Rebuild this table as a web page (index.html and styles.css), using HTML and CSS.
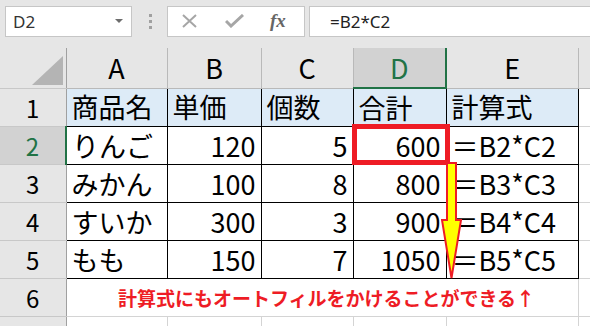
FILE: index.html
```html
<!DOCTYPE html>
<html lang="ja">
<head>
    <meta charset="UTF-8">
    <meta name="viewport" content="width=device-width, initial-scale=1.0">
    <title>計算式のオートフィル</title>
    <link rel="stylesheet" href="styles.css">
</head>
<body>
    <div class="toolbar">
        <div class="namebox">
            <span>D2</span>
            <svg class="drop" width="8" height="5" viewBox="0 0 8 5"><path d="M0 0h8L4 4z" fill="#6d6d6d"/></svg>
        </div>
        <div class="grip"><i></i><i></i><i></i></div>
        <div class="fx-buttons">
            <svg width="18" height="14" viewBox="0 0 18 14"><path d="M2 1l13 12M15 1L2 13" stroke="#a6a6a6" stroke-width="2" fill="none"/></svg>
            <svg width="19" height="14" viewBox="0 0 19 14"><path d="M1 7l5 5L18 1" stroke="#a6a6a6" stroke-width="3" fill="none"/></svg>
            <span class="fx">fx</span>
        </div>
        <div class="formula">=B2*C2</div>
    </div>

    <div class="sheet">
        <table>
            <colgroup>
                <col class="c-head"><col class="c-a"><col class="c-b"><col class="c-c"><col class="c-d"><col class="c-e"><col>
            </colgroup>
            <tr class="col-heads">
                <th class="corner"><svg width="32" height="30" viewBox="0 0 32 30"><path d="M0 29L31 0v29z" fill="#b4b4b4"/></svg></th>
                <th>A</th><th>B</th><th>C</th><th class="active">D</th><th>E</th><th></th>
            </tr>
            <tr class="title-row">
                <th>1</th>
                <td>商品名</td><td>単価</td><td>個数</td><td>合計</td><td>計算式</td><td class="grid"></td>
            </tr>
            <tr>
                <th class="active">2</th>
                <td>りんご</td><td class="num">120</td><td class="num">5</td>
                <td class="num picked">600<span class="mark"></span></td>
                <td>＝B2*C2</td><td class="grid"></td>
            </tr>
            <tr>
                <th>3</th>
                <td>みかん</td><td class="num">100</td><td class="num">8</td><td class="num">800</td><td>＝B3*C3</td><td class="grid"></td>
            </tr>
            <tr>
                <th>4</th>
                <td>すいか</td><td class="num">300</td><td class="num">3</td><td class="num">900</td><td>＝B4*C4</td><td class="grid"></td>
            </tr>
            <tr>
                <th>5</th>
                <td>もも</td><td class="num">150</td><td class="num">7</td><td class="num">1050</td><td>＝B5*C5</td><td class="grid"></td>
            </tr>
            <tr class="plain">
                <th>6</th>
                <td colspan="5" class="note">計算式にもオートフィルをかけることができる↑</td><td></td>
            </tr>
            <tr class="plain">
                <th>7</th>
                <td></td><td></td><td></td><td></td><td></td><td></td>
            </tr>
        </table>

        <!-- フィルの矢印 -->
        <svg class="fill-arrow" width="22" height="120" viewBox="0 0 22 120">
            <path d="M6 2H15V59H20L10.5 117L1 59H6Z" fill="#ffff00" stroke="#ee1c25" stroke-width="2"/>
        </svg>
    </div>
</body>
</html>
```

FILE: styles.css
```css
body {
    margin: 0;
    background-color: #e6e6e6;
    font-family: "Noto Sans CJK JP", "Noto Sans", sans-serif;
    overflow: hidden;
}

/* 数式バー */
.toolbar {
    display: flex;
    align-items: center;
    height: 48px;
    padding-left: 5px;
}

.namebox {
    box-sizing: border-box;
    width: 127px;
    height: 31px;
    margin-top: -6px;
    background-color: white;
    border: 1px solid #c6c6c6;
    display: flex;
    align-items: center;
    justify-content: space-between;
    padding: 0 8px 0 7px;
    font-family: "Noto Sans", sans-serif;
    font-size: 17px;
    color: #333;
}

.grip {
    display: flex;
    flex-direction: column;
    gap: 3px;
    margin: -6px 15px 0 17px;
}

.grip i {
    width: 3px;
    height: 3px;
    background-color: #a0a0a0;
}

.fx-buttons {
    box-sizing: border-box;
    width: 138px;
    height: 31px;
    margin-top: -6px;
    background-color: white;
    border: 1px solid #c6c6c6;
    display: flex;
    align-items: center;
    gap: 26px;
    padding-left: 13px;
}

.fx {
    font-family: "Liberation Serif", serif;
    font-style: italic;
    font-weight: bold;
    font-size: 19px;
    color: #666;
}

.formula {
    flex: 1;
    box-sizing: border-box;
    height: 31px;
    margin: -6px 0 0 4px;
    background-color: white;
    border: 1px solid #c6c6c6;
    border-right: none;
    padding-left: 20px;
    font-family: "Noto Sans", sans-serif;
    font-size: 17px;
    line-height: 29px;
    color: #222;
}

/* シート */
.sheet {
    position: relative;
}

table {
    border-collapse: collapse;
    table-layout: fixed;
    width: 600px;
}

.c-head { width: 66px; }
.c-a { width: 101px; }
.c-b { width: 94px; }
.c-c { width: 92px; }
.c-d { width: 93px; }
.c-e { width: 132px; }

th {
    font-weight: normal;
    background-color: #e6e6e6;
    color: black;
    padding: 0;
    font-size: 24px;
}

.col-heads th {
    height: 37px;
    font-size: 27px;
    border-right: 1px solid #b9b9b9;
    border-bottom: 1px solid #b9b9b9;
}

.col-heads th.active {
    background-color: #d2d2d2;
    color: #217346;
    border-bottom: 2px solid #217346;
}

.col-heads .corner {
    text-align: right;
    vertical-align: bottom;
    border-right: 1px solid #a0a0a0;
}

.corner svg {
    display: block;
    margin: 0 2px 2px auto;
}

tr th:first-child {
    border-right: 1px solid #a0a0a0;
    border-bottom: 1px solid #c8c8c8;
}

tr th.active {
    background-color: #d2d2d2;
    color: #217346;
    border-right: 2px solid #217346;
}

td {
    height: 37px;
    padding: 0 5px;
    background-color: white;
    border: 1px solid black;
    font-size: 27px;
    line-height: 36px;
    white-space: nowrap;
    overflow: visible;
}

td.num {
    text-align: right;
}

td.grid,
.plain td {
    border: 1px solid #d4d4d4;
}

.title-row td {
    background-color: #ddebf7;
}

.title-row td.grid {
    background-color: white;
}

td.picked {
    position: relative;
}

/* 選択セルの赤枠 */
.mark {
    position: absolute;
    left: -2px;
    top: -3px;
    right: -4px;
    bottom: -1px;
    border: 5px solid #ee1c25;
}

td.note {
    text-align: center;
    color: #ee1c25;
    font-weight: bold;
    font-size: 19px;
    padding: 0 0 0 9px;
}

.fill-arrow {
    position: absolute;
    left: 441px;
    top: 113px;
}
```
